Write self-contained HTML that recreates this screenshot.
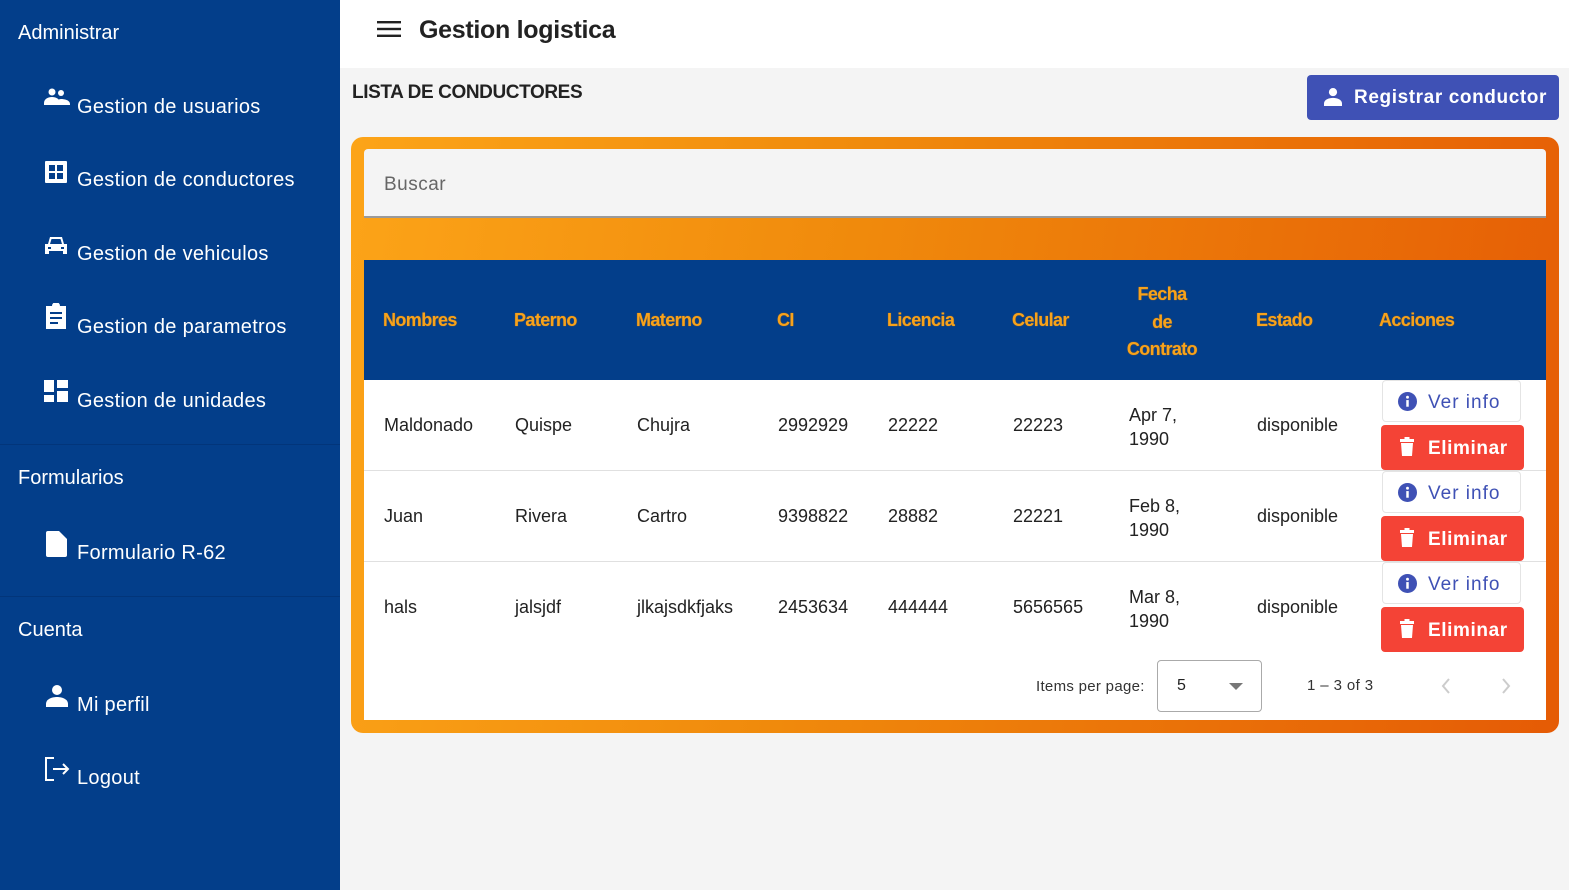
<!DOCTYPE html>
<html><head><meta charset="utf-8"><style>
*{margin:0;padding:0;box-sizing:border-box}
body{width:1569px;height:890px;position:relative;background:#f4f4f4;font-family:"Liberation Sans",Arial,sans-serif;overflow:hidden}
.abs{position:absolute}
#side{left:0;top:0;width:340px;height:890px;background:#033e8a;color:#fff}
.sh{position:absolute;left:18px;font-size:20px;transform:translateY(2px)}
.it{position:absolute;left:77px;font-size:20px;letter-spacing:.3px;transform:translateY(2px)}
.ic{position:absolute;left:44px}
.sep{position:absolute;left:0;width:340px;height:1px;background:#02357a}
#top{left:340px;top:0;width:1229px;height:68px;background:#fff}
.th{position:absolute;top:260px;color:#f7a21b;font-weight:bold;font-size:18px;letter-spacing:-.6px;text-shadow:0 0 1px #c47000;transform:translateY(1px)}
.td{position:absolute;font-size:18px;color:#222;transform:translateY(2px)}
.ver{position:absolute;left:1382px;width:139px;height:42px;background:#fff;border:1px solid #e4e4e4;border-radius:4px;color:#3f51b5;font-size:19px;letter-spacing:1px}
.eli{position:absolute;left:1381px;width:143px;height:45px;background:#f44336;border-radius:4px;color:#fff;font-size:19px;font-weight:bold;letter-spacing:.6px}
.rowline{position:absolute;left:364px;width:1182px;height:1px;background:#e0e0e0}
</style></head><body>
<div id="side" class="abs">
<div class="sh" style="top:20px">Administrar</div>
<svg class="ic" style="top:88px" width="26" height="20" viewBox="0 0 26 20" fill="#fff"><circle cx="8" cy="4" r="3.5"/><circle cx="17" cy="5" r="3"/><path d="M0 15c0-4 4-6 8-6s8 2 8 6v2H0zM12 17c0-3 2-6 5-6s9 1 9 5v1z"/></svg>
<div class="it" style="top:94px">Gestion de usuarios</div>
<svg class="ic" style="top:160px" width="24" height="24" viewBox="0 0 24 24" fill="#fff"><path d="M2 1h20a1 1 0 0 1 1 1v20a1 1 0 0 1-1 1H2a1 1 0 0 1-1-1V2a1 1 0 0 1 1-1zM5 5v6h6V5zm8 0v6h6V5zM5 13v6h6v-6zm8 0v6h6v-6z"/><rect x="6" y="6" width="4" height="4" fill="#033e8a"/></svg>
<div class="it" style="top:167px">Gestion de conductores</div>
<svg class="ic" style="top:236px" width="24" height="20" viewBox="0 0 24 20" fill="#fff"><path d="M4 8L6 1h12l2 7h3v10h-4v-3H5v3H1V8zM6 8h12l-1.5-5h-9zM4 11v2h3v-2zm13 0v2h3v-2z" fill-rule="evenodd"/></svg>
<div class="it" style="top:241px">Gestion de vehiculos</div>
<svg class="ic" style="top:303px" width="24" height="26" viewBox="0 0 24 26" fill="#fff"><path d="M2 3h6a4 4 0 0 1 8 0h6v23H2zM6 9v2h12V9zm0 5v2h12v-2zm0 5v2h8v-2z" fill-rule="evenodd"/></svg>
<div class="it" style="top:314px">Gestion de parametros</div>
<svg class="ic" style="top:380px" width="24" height="24" viewBox="0 0 24 24" fill="#fff"><rect x="0" y="0" width="10" height="12"/><rect x="13" y="0" width="11" height="8"/><rect x="0" y="15" width="10" height="7"/><rect x="13" y="11" width="11" height="11"/></svg>
<div class="it" style="top:388px">Gestion de unidades</div>
<div class="sep" style="top:444px"></div>
<div class="sh" style="top:465px">Formularios</div>
<svg class="ic" style="left:46px;top:531px" width="22" height="26" viewBox="0 0 22 26" fill="#fff"><path d="M2 0h11l8 8v16a2 2 0 0 1-2 2H2a2 2 0 0 1-2-2V2a2 2 0 0 1 2-2z"/></svg>
<div class="it" style="top:540px">Formulario R-62</div>
<div class="sep" style="top:596px"></div>
<div class="sh" style="top:617px">Cuenta</div>
<svg class="ic" style="left:46px;top:685px" width="22" height="22" viewBox="0 0 22 22" fill="#fff"><circle cx="11" cy="5" r="5"/><path d="M0 19c0-5 6-7 11-7s11 2 11 7v3H0z"/></svg>
<div class="it" style="top:692px">Mi perfil</div>
<svg class="ic" style="top:757px" width="26" height="24" viewBox="0 0 26 24" fill="none" stroke="#fff" stroke-width="2"><path d="M10 1H2v22h8M9 12h15M19 7l5 5-5 5"/></svg>
<div class="it" style="top:765px">Logout</div>
</div>
<div id="top" class="abs">
<svg class="abs" style="left:37px;top:20px" width="24" height="18" viewBox="0 0 24 18" fill="#222"><rect y="1" width="24" height="2.4"/><rect y="7.8" width="24" height="2.4"/><rect y="14.6" width="24" height="2.4"/></svg>
<div class="abs" style="left:79px;top:16px;font-size:25px;font-weight:bold;color:#222;letter-spacing:-.3px">Gestion logistica</div>
</div>
<div class="abs" style="left:352px;top:82px;font-size:19px;font-weight:bold;color:#222;letter-spacing:-.4px">LISTA DE CONDUCTORES</div>
<div class="abs" style="left:1307px;top:75px;width:252px;height:45px;background:#3f51b5;border-radius:4px;color:#fff;font-size:19px;font-weight:bold;letter-spacing:.6px">
<svg class="abs" style="left:17px;top:13px" width="18" height="18" viewBox="0 0 22 22" fill="#fff"><circle cx="11" cy="5" r="5"/><path d="M0 19c0-5 6-7 11-7s11 2 11 7v3H0z"/></svg>
<span class="abs" style="left:47px;top:12px">Registrar conductor</span></div>
<div class="abs" style="left:351px;top:137px;width:1208px;height:596px;border-radius:12px;background:linear-gradient(100deg,#fca418 0%,#f08a0c 40%,#e55b05 100%)"></div>
<div class="abs" style="left:364px;top:149px;width:1182px;height:69px;background:#f4f4f4;border-bottom:2px solid #9a9a9a;border-radius:4px 4px 0 0"></div>
<div class="abs" style="left:384px;top:174px;font-size:19px;color:#666;letter-spacing:.5px">Buscar</div>
<div class="abs" style="left:364px;top:260px;width:1182px;height:120px;background:#033e8a"></div>
<div class="abs" style="left:364px;top:380px;width:1182px;height:340px;background:#fff"></div>
<div class="th" style="left:383px;top:309px">Nombres</div>
<div class="th" style="left:514px;top:309px">Paterno</div>
<div class="th" style="left:636px;top:309px">Materno</div>
<div class="th" style="left:777px;top:309px">CI</div>
<div class="th" style="left:887px;top:309px">Licencia</div>
<div class="th" style="left:1012px;top:309px">Celular</div>
<div class="th" style="left:1112px;top:280px;width:100px;text-align:center;line-height:27.5px">Fecha<br>de<br>Contrato</div>
<div class="th" style="left:1256px;top:309px">Estado</div>
<div class="th" style="left:1379px;top:309px">Acciones</div>
<div class="rowline" style="top:470px"></div>
<div class="rowline" style="top:561px"></div>
<div class="td" style="left:384px;top:413px">Maldonado</div><div class="td" style="left:515px;top:413px">Quispe</div><div class="td" style="left:637px;top:413px">Chujra</div><div class="td" style="left:778px;top:413px">2992929</div><div class="td" style="left:888px;top:413px">22222</div><div class="td" style="left:1013px;top:413px">22223</div><div class="td" style="left:1129px;top:401px;line-height:24px">Apr 7,<br>1990</div><div class="td" style="left:1257px;top:413px">disponible</div>
<div class="td" style="left:384px;top:504px">Juan</div><div class="td" style="left:515px;top:504px">Rivera</div><div class="td" style="left:637px;top:504px">Cartro</div><div class="td" style="left:778px;top:504px">9398822</div><div class="td" style="left:888px;top:504px">28882</div><div class="td" style="left:1013px;top:504px">22221</div><div class="td" style="left:1129px;top:492px;line-height:24px">Feb 8,<br>1990</div><div class="td" style="left:1257px;top:504px">disponible</div>
<div class="td" style="left:384px;top:595px">hals</div><div class="td" style="left:515px;top:595px">jalsjdf</div><div class="td" style="left:637px;top:595px">jlkajsdkfjaks</div><div class="td" style="left:778px;top:595px">2453634</div><div class="td" style="left:888px;top:595px">444444</div><div class="td" style="left:1013px;top:595px">5656565</div><div class="td" style="left:1129px;top:583px;line-height:24px">Mar 8,<br>1990</div><div class="td" style="left:1257px;top:595px">disponible</div>
<div class="ver" style="top:380px"><svg class="abs" style="left:15px;top:11px" width="19" height="19" viewBox="0 0 20 20"><circle cx="10" cy="10" r="10" fill="#3f51b5"/><rect x="8.7" y="8.5" width="2.6" height="7" fill="#fff"/><circle cx="10" cy="5.5" r="1.5" fill="#fff"/></svg><span class="abs" style="left:45px;top:11px">Ver info</span></div>
<div class="eli" style="top:425px"><svg class="abs" style="left:19px;top:12px" width="14" height="19" viewBox="0 0 14 19" fill="#fff"><rect x="0" y="2" width="14" height="3"/><rect x="4.5" y="0" width="5" height="3"/><path d="M1 6h12l-1 13H2z"/></svg><span class="abs" style="left:47px;top:13px">Eliminar</span></div>
<div class="ver" style="top:471px"><svg class="abs" style="left:15px;top:11px" width="19" height="19" viewBox="0 0 20 20"><circle cx="10" cy="10" r="10" fill="#3f51b5"/><rect x="8.7" y="8.5" width="2.6" height="7" fill="#fff"/><circle cx="10" cy="5.5" r="1.5" fill="#fff"/></svg><span class="abs" style="left:45px;top:11px">Ver info</span></div>
<div class="eli" style="top:516px"><svg class="abs" style="left:19px;top:12px" width="14" height="19" viewBox="0 0 14 19" fill="#fff"><rect x="0" y="2" width="14" height="3"/><rect x="4.5" y="0" width="5" height="3"/><path d="M1 6h12l-1 13H2z"/></svg><span class="abs" style="left:47px;top:13px">Eliminar</span></div>
<div class="ver" style="top:562px"><svg class="abs" style="left:15px;top:11px" width="19" height="19" viewBox="0 0 20 20"><circle cx="10" cy="10" r="10" fill="#3f51b5"/><rect x="8.7" y="8.5" width="2.6" height="7" fill="#fff"/><circle cx="10" cy="5.5" r="1.5" fill="#fff"/></svg><span class="abs" style="left:45px;top:11px">Ver info</span></div>
<div class="eli" style="top:607px"><svg class="abs" style="left:19px;top:12px" width="14" height="19" viewBox="0 0 14 19" fill="#fff"><rect x="0" y="2" width="14" height="3"/><rect x="4.5" y="0" width="5" height="3"/><path d="M1 6h12l-1 13H2z"/></svg><span class="abs" style="left:47px;top:13px">Eliminar</span></div>
<div class="abs" style="left:1036px;top:678px;font-size:15px;color:#333;letter-spacing:.3px">Items per page:</div>
<div class="abs" style="left:1157px;top:660px;width:105px;height:52px;border:1px solid #aaa;border-radius:4px"></div>
<div class="abs" style="left:1177px;top:677px;font-size:16px;color:#222">5</div>
<svg class="abs" style="left:1229px;top:683px" width="14" height="8" viewBox="0 0 14 8"><path d="M0 0h14L7 7z" fill="#777"/></svg>
<div class="abs" style="left:1307px;top:677px;font-size:15px;color:#333;letter-spacing:.4px">1 – 3 of 3</div>
<svg class="abs" style="left:1441px;top:678px" width="10" height="16" viewBox="0 0 10 16" fill="none" stroke="#ccc" stroke-width="2"><path d="M8 1L2 8l6 7"/></svg>
<svg class="abs" style="left:1501px;top:678px" width="10" height="16" viewBox="0 0 10 16" fill="none" stroke="#ccc" stroke-width="2"><path d="M2 1l6 7-6 7"/></svg>
</body></html>
